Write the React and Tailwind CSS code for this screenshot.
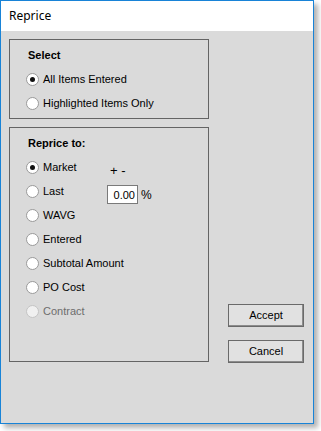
import { useState } from "react";

const font = { fontFamily: '"Liberation Sans", Arial, sans-serif' };

function Radio({ label, checked, disabled, onSelect }) {
  return (
    <div
      className="flex items-center h-6 cursor-default whitespace-nowrap"
      onClick={() => !disabled && onSelect && onSelect(label)}
    >
      <span
        className={
          "w-[13px] h-[13px] rounded-full border flex items-center justify-center shrink-0 " +
          (disabled ? "border-[#c4c4c4] bg-[#f0f0f0]" : "border-[#9a9a9a] bg-white")
        }
      >
        {checked && <span className="w-[5px] h-[5px] rounded-full bg-[#111]" />}
      </span>
      <span className={"ml-[4px] text-[11px] leading-none " + (disabled ? "text-[#6d6d6d]" : "text-black")}>
        {label}
      </span>
    </div>
  );
}

function Button({ children }) {
  return (
    <button className="w-[76px] h-[23px] bg-[#e1e1e1] border border-[#6a6a6a] shadow-[inset_-1px_-1px_0_#8c8c8c] text-[11px] text-black leading-none">
      {children}
    </button>
  );
}

export default function App() {
  const [scope, setScope] = useState("All Items Entered");
  const [target, setTarget] = useState("Market");
  const [pct, setPct] = useState("0.00");

  const targets = ["Market", "Last", "WAVG", "Entered", "Subtotal Amount", "PO Cost"];

  return (
    <div className="w-[321px] h-[431px] bg-white" style={font}>
      <div className="w-[314px] h-[424px] border border-[#1883d7] flex flex-col shadow-[4px_4px_5px_rgba(0,0,0,0.3)]">
        <div className="h-[30px] bg-white flex items-center pl-[8px]">
          <span className="text-[12px] text-black" style={{ fontFamily: '"Noto Sans", sans-serif' }}>
            Reprice
          </span>
        </div>

        <div className="flex-1 bg-[#dadada] flex">
          <div className="pl-[8px] pt-[8px] flex flex-col gap-[8px]">
            <div className="w-[200px] h-[80px] border border-[#646464] pt-[3px]">
              <div className="h-6 flex items-center pl-[18px] text-[11px] font-bold">Select</div>
              <div className="pl-[16px]">
                {["All Items Entered", "Highlighted Items Only"].map((l) => (
                  <Radio key={l} label={l} checked={scope === l} onSelect={setScope} />
                ))}
              </div>
            </div>

            <div className="w-[200px] h-[235px] border border-[#646464] pt-[3px] flex">
              <div className="w-[97px] shrink-0 pl-[16px]">
                <div className="h-6 flex items-center pl-[2px] text-[11px] font-bold whitespace-nowrap">Reprice to:</div>
                {targets.map((l) => (
                  <Radio key={l} label={l} checked={target === l} onSelect={setTarget} />
                ))}
                <Radio label="Contract" disabled />
              </div>
              <div className="pt-[33px]">
                <div className="h-[14px] leading-[14px] pl-[3px] text-[13px] text-black">+ -</div>
                <div className="mt-[7px] flex items-center">
                  <input
                    value={pct}
                    onChange={(e) => setPct(e.target.value)}
                    className="w-[31px] h-[19px] border border-[#7a7a7a] bg-white text-right pr-[2px] text-[11px] text-black outline-none"
                  />
                  <span className="ml-[3px] text-[12px] text-black">%</span>
                </div>
              </div>
            </div>
          </div>

          <div className="ml-[19px] pt-[273px] flex flex-col gap-[13px]">
            <Button>Accept</Button>
            <Button>Cancel</Button>
          </div>
        </div>
      </div>
    </div>
  );
}
